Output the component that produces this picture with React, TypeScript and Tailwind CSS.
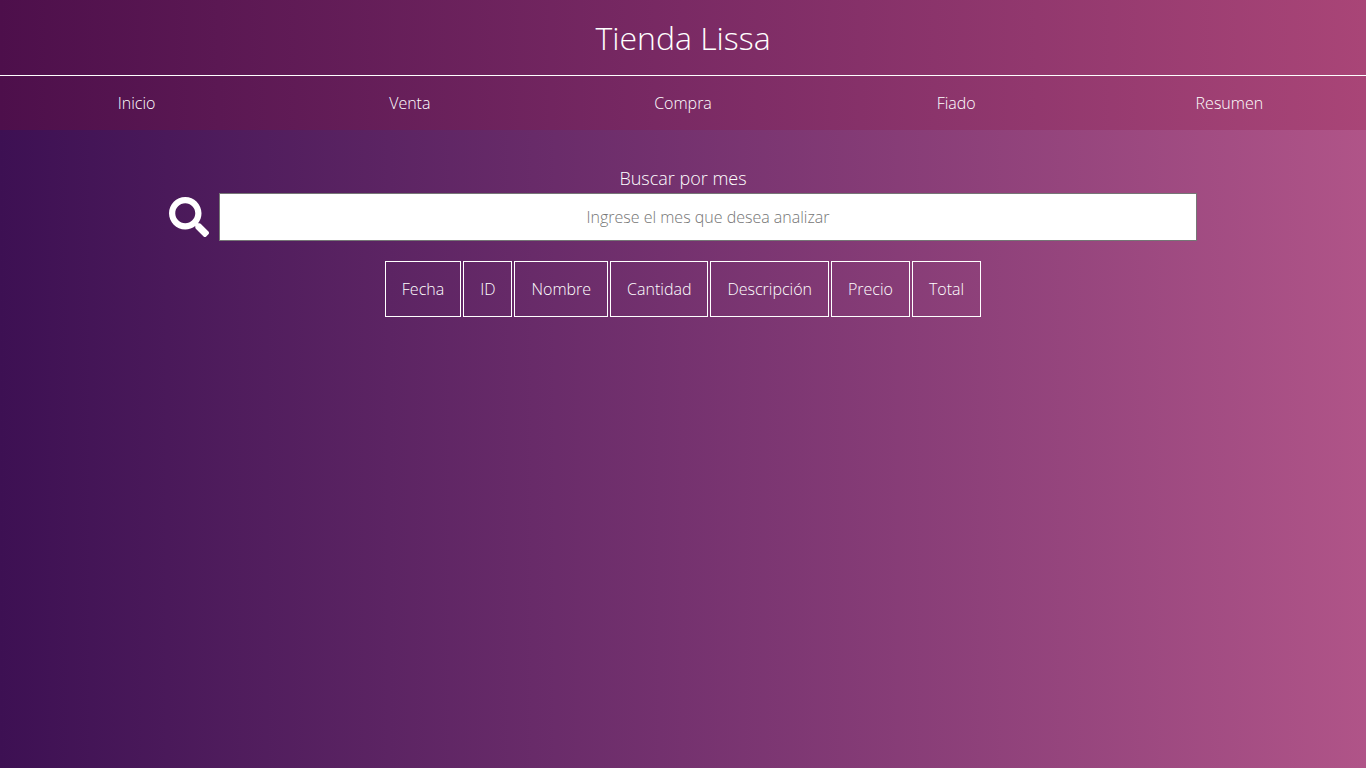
import { useState } from "react";
import { FaSearch } from "react-icons/fa";

const links = ["Inicio", "Venta", "Compra", "Fiado", "Resumen"];
const columns = ["Fecha", "ID", "Nombre", "Cantidad", "Descripción", "Precio", "Total"];

export default function App() {
  const [month, setMonth] = useState("");
  return (
    <div className="min-h-screen bg-linear-to-r from-[#3d1053] via-[#75326f] to-[#b05488] font-['Open_Sans',sans-serif] text-base font-light text-white">
      <header className="bg-linear-to-r from-[#4d0f4b] via-[#7a2a64] to-[#a94577]">
        <h1 className="border-b border-white py-4 text-center text-[32px] leading-[43px]">Tienda Lissa</h1>
        <nav className="grid grid-cols-5">
          {links.map((link) => (
            <a key={link} href="#" className="py-4 text-center leading-[22px]">{link}</a>
          ))}
        </nav>
      </header>
      <main className="flex flex-col items-center px-4 pt-[33px]">
        <label htmlFor="month" className="text-lg leading-[30px]">Buscar por mes</label>
        <div className="flex w-full max-w-[1028px] items-center gap-2.5">
          <FaSearch className="size-10 shrink-0" aria-hidden="true" />
          <input
            id="month"
            type="text"
            value={month}
            onChange={(e) => setMonth(e.target.value)}
            placeholder="Ingrese el mes que desea analizar"
            className="h-12 min-w-0 flex-1 border border-[#767676] bg-white text-center font-light text-black placeholder:text-[#757575]"
          />
        </div>
        <table className="mt-[18px] border-separate border-spacing-[2px]">
          <thead>
            <tr>
              {columns.map((column) => (
                <th key={column} scope="col" className="border border-white p-4 leading-[22px] font-light">{column}</th>
              ))}
            </tr>
          </thead>
        </table>
      </main>
    </div>
  );
}
